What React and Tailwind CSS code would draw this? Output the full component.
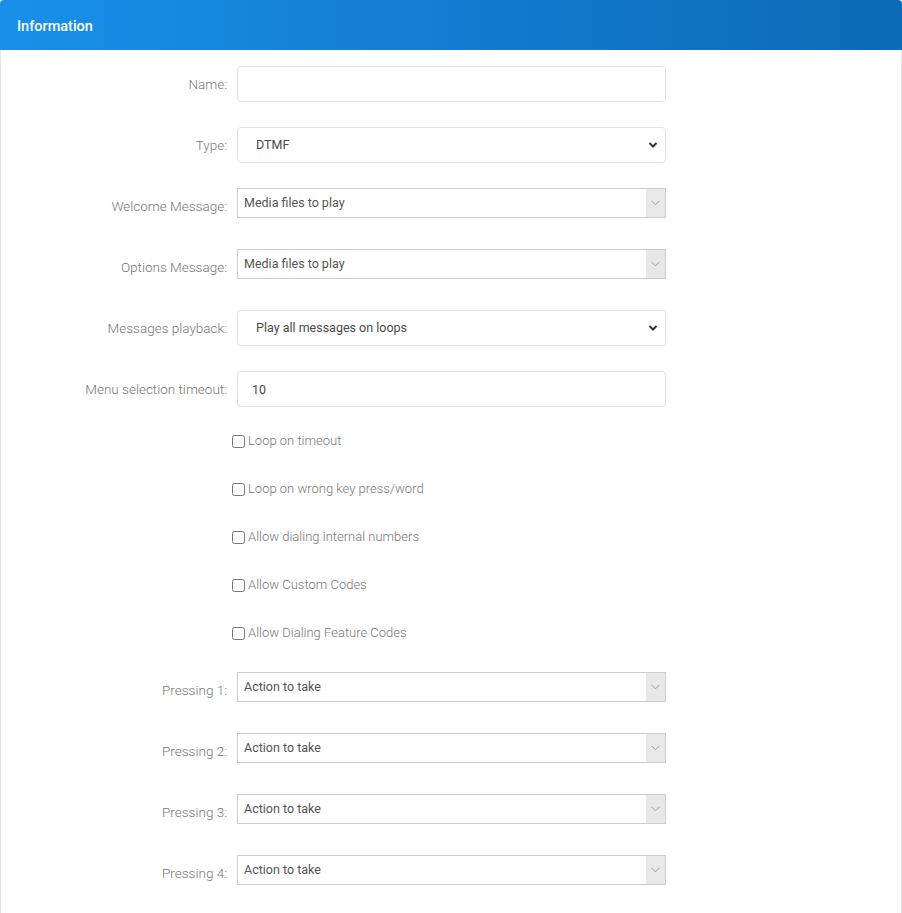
import React from 'react';

// Form rows for the IVR information panel
const checkboxes = [
  'Loop on timeout',
  'Loop on wrong key press/word',
  'Allow dialing internal numbers',
  'Allow Custom Codes',
  'Allow Dialing Feature Codes',
];

const Row = ({ label, children, last }) => (
  <div className={`flex h-[36px] items-start ${last ? '' : 'mb-[25px]'}`}>
    <label className="w-[226px] h-[36px] pt-[1px] flex items-center justify-end text-[13.5px] text-[#777] font-light">
      {label}
    </label>
    <div className="ml-[10px] w-[429px]">{children}</div>
  </div>
);

const TextInput = ({ value }) => (
  <input
    type="text"
    defaultValue={value}
    className="w-full h-[36px] border border-[#e3e3e3] rounded-[4px] px-[14px] text-[12.5px] text-[#4a4a4a] outline-none"
  />
);

const NativeSelect = ({ value }) => (
  <div className="relative">
    <select
      defaultValue={value}
      className="appearance-none w-full h-[36px] border border-[#e3e3e3] rounded-[4px] pl-[18px] text-[12.5px] text-[#4a4a4a] bg-white outline-none"
    >
      <option>{value}</option>
    </select>
    <svg className="absolute right-[8px] top-[14px] pointer-events-none" width="10" height="8" viewBox="0 0 10 8">
      <path d="M1.5 2 L5 5.5 L8.5 2" fill="none" stroke="#333" strokeWidth="2" />
    </svg>
  </div>
);

const Select2 = ({ value }) => (
  <div className="flex h-[30px] border border-[#ccc] bg-white">
    <div className="flex-1 flex items-center pl-[6px] text-[12.5px] text-[#555]">{value}</div>
    <div className="w-[19px] bg-[#e8e8e8] flex items-center justify-center">
      <svg width="9" height="6" viewBox="0 0 9 6">
        <path d="M0.5 0.8 L4.5 4.8 L8.5 0.8" fill="none" stroke="#888" strokeWidth="0.8" />
      </svg>
    </div>
  </div>
);

export default function App() {
  return (
    <div className="w-[902px] min-h-[913px] bg-white font-['Roboto',sans-serif]">
      <div className="h-[50px] rounded-t-[4px] bg-gradient-to-r from-[#1990ea] to-[#0c6ab7] flex items-center px-[17px] pt-[3px]">
        <h3 className="text-white text-[14.5px] font-medium">Information</h3>
      </div>

      <div className="border-x border-[#e5e5e5] min-h-[863px] pt-[16px]">
        <Row label="Name:"><TextInput value="" /></Row>
        <Row label="Type:"><NativeSelect value="DTMF" /></Row>
        <Row label="Welcome Message:"><Select2 value="Media files to play" /></Row>
        <Row label="Options Message:"><Select2 value="Media files to play" /></Row>
        <Row label="Messages playback:"><NativeSelect value="Play all messages on loops" /></Row>
        <Row label="Menu selection timeout:"><TextInput value="10" /></Row>

        <div className="pl-[231px]">
          {checkboxes.map((c) => (
            <label key={c} className="flex items-center h-[18px] mb-[30px] text-[13px] text-[#777] font-light">
              <input type="checkbox" className="m-0 w-[13px] h-[13px]" />
              <span className="ml-[3px]">{c}</span>
            </label>
          ))}
        </div>

        {[1, 2, 3, 4].map((n) => (
          <Row key={n} label={`Pressing ${n}:`}>
            <Select2 value="Action to take" />
          </Row>
        ))}
      </div>
    </div>
  );
}
